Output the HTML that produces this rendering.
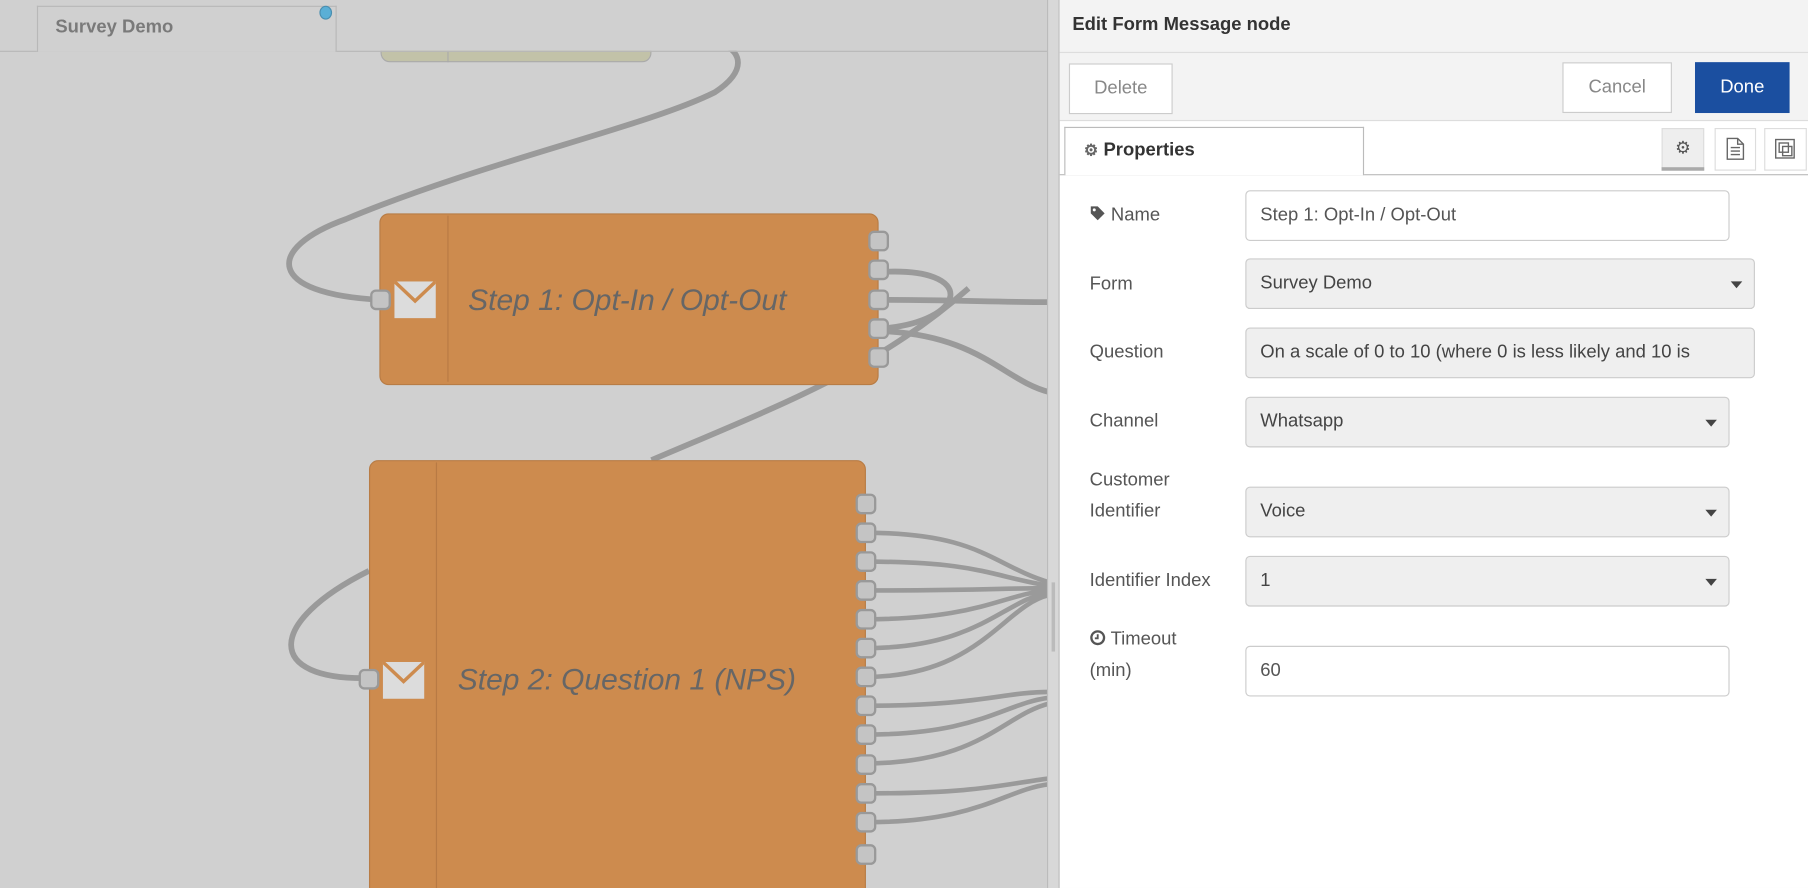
<!DOCTYPE html>
<html><head><meta charset="utf-8"><style>
html,body{margin:0;padding:0;width:1808px;height:888px;overflow:hidden;background:#d0d0d0}
#o{position:absolute;left:0;top:0;width:1808px;height:888px;overflow:hidden}
#w{position:absolute;left:0;top:0;width:1568px;height:770px;overflow:hidden;transform:scale(1.15306,1.1532);transform-origin:0 0;font-family:"Liberation Sans",sans-serif}
.a{position:absolute}
.lbl{position:absolute;left:945px;color:#555;font-size:16px;line-height:27px}
.in{position:absolute;left:1080px;box-sizing:border-box;border:1px solid #ccc;border-radius:4px;height:44px;font-size:16px;color:#555;line-height:42px;padding-left:12px;background:#fff;white-space:nowrap;overflow:hidden}
.sel{background:#efefef;color:#444}
.car{position:absolute;right:10px;top:19px;width:0;height:0;border-left:5px solid transparent;border-right:5px solid transparent;border-top:6px solid #444}
.btn{position:absolute;box-sizing:border-box;border:1px solid #ccc;background:#fff;color:#888;font-size:16px;text-align:center;height:44px;line-height:42px}
.port{position:absolute;width:18px;height:18px;box-sizing:border-box;background:#c4c4c4;border:2px solid #999;border-radius:5px}
</style></head><body><div id="o"><div id="w">
<svg class="a" style="left:0;top:0" width="920" height="770">
<g fill="none" stroke="#9a9a9a" stroke-width="5">
<path d="M330 260 C230 255 230 215 300 190 C420 140 560 110 620 80 C650 60 640 45 630 40"/>
<path d="M762 236 C850 230 840 280 762 285"/>
<path d="M762 260 C830 260 860 262 910 262"/>
<path d="M762 287 C850 290 870 330 910 340"/>
<path d="M565 399 C680 350 760 320 840 250"/>
<path d="M320 588 C230 590 230 540 320 495"/>
<g stroke-width="4">
<path d="M750 462 C850 462 860 490 910 505"/>
<path d="M750 487 C850 487 860 500 910 508"/>
<path d="M750 512 C850 512 870 510 910 510"/>
<path d="M750 537 C850 537 870 515 910 512"/>
<path d="M750 562 C850 562 870 520 910 514"/>
<path d="M750 587 C850 587 870 525 910 516"/>
<path d="M750 612 C850 612 870 600 910 600"/>
<path d="M750 637 C850 637 870 610 910 605"/>
<path d="M750 662 C850 662 870 620 910 610"/>
<path d="M750 688 C850 688 870 680 910 675"/>
<path d="M750 713 C850 713 870 685 910 680"/>
</g></g>
</svg>
<div class="a" style="left:330px;top:20px;width:235px;height:34px;background:#c2c2a8;border:1px solid #aaa;border-radius:0 0 8px 8px;box-sizing:border-box"></div>
<div class="a" style="left:388px;top:44px;width:1px;height:10px;background:#aaa"></div>
<div class="a" style="left:0;top:0;width:918px;height:44px;background:#d0d0d0"></div>
<div class="a" style="left:0;top:44px;width:918px;height:1px;background:#b8b8b8"></div>
<div class="a" style="left:32px;top:5px;width:260px;height:40px;background:#d0d0d0;border:1px solid #b8b8b8;border-bottom:none;box-sizing:border-box"></div>
<div class="a" style="left:48px;top:12px;font-size:16px;font-weight:bold;color:#7a7a7a;line-height:24px">Survey Demo</div>
<div class="a" style="left:277px;top:5px;width:11px;height:12px;border-radius:50%;background:#5aafd6;border:1px solid #4a8fb0;box-sizing:border-box"></div>
<div class="a" style="left:329px;top:185px;width:433px;height:149px;background:#cd8b4e;border:1px solid #b87c45;border-radius:8px;box-sizing:border-box"></div>
<div class="a" style="left:388px;top:187px;width:1px;height:144px;background:#b87a44"></div>
<svg class="a" style="left:342px;top:244px" width="36" height="32"><rect width="36" height="32" fill="#dcdcdc"/><path d="M0 0 L18 17 L36 0" fill="none" stroke="#cd8b4e" stroke-width="3"/></svg>
<div class="a" style="left:406px;top:244px;font-size:26px;font-style:italic;color:#666;line-height:32px">Step 1: Opt-In / Opt-Out</div>
<div class="port" style="left:321px;top:251px"></div>
<div class="port" style="left:753px;top:200px"></div><div class="port" style="left:753px;top:225px"></div><div class="port" style="left:753px;top:251px"></div><div class="port" style="left:753px;top:276px"></div><div class="port" style="left:753px;top:301px"></div>
<div class="a" style="left:320px;top:399px;width:431px;height:400px;background:#cd8b4e;border:1px solid #b87c45;border-radius:8px;box-sizing:border-box"></div>
<div class="a" style="left:378px;top:401px;width:1px;height:390px;background:#b87a44"></div>
<svg class="a" style="left:332px;top:574px" width="36" height="32"><rect width="36" height="32" fill="#dcdcdc"/><path d="M0 0 L18 17 L36 0" fill="none" stroke="#cd8b4e" stroke-width="3"/></svg>
<div class="a" style="left:397px;top:573px;font-size:26px;font-style:italic;color:#666;line-height:32px">Step 2: Question 1 (NPS)</div>
<div class="port" style="left:311px;top:580px"></div>
<div class="port" style="left:742px;top:428px"></div><div class="port" style="left:742px;top:453px"></div><div class="port" style="left:742px;top:478px"></div><div class="port" style="left:742px;top:503px"></div><div class="port" style="left:742px;top:528px"></div><div class="port" style="left:742px;top:553px"></div><div class="port" style="left:742px;top:578px"></div><div class="port" style="left:742px;top:603px"></div><div class="port" style="left:742px;top:628px"></div><div class="port" style="left:742px;top:654px"></div><div class="port" style="left:742px;top:679px"></div><div class="port" style="left:742px;top:704px"></div><div class="port" style="left:742px;top:732px"></div>
<div class="a" style="left:908px;top:0;width:10px;height:770px;background:#d8d8d8;border-left:1px solid #bbb"></div>
<div class="a" style="left:912px;top:505px;width:3px;height:60px;background:#bbb"></div>
<div class="a" style="left:918px;top:0;width:650px;height:770px;background:#fff;border-left:1px solid #bbb"></div>
<div class="a" style="left:919px;top:0;width:649px;height:105px;background:#f3f3f3"></div>
<div class="a" style="left:919px;top:45px;width:649px;height:1px;background:#ddd"></div>
<div class="a" style="left:919px;top:104px;width:649px;height:1px;background:#ddd"></div>
<div class="a" style="left:930px;top:11px;font-size:16px;font-weight:bold;color:#333;line-height:22px">Edit Form Message node</div>
<div class="btn" style="left:927px;top:55px;width:90px">Delete</div>
<div class="btn" style="left:1355px;top:54px;width:95px">Cancel</div>
<div class="btn" style="left:1470px;top:54px;width:82px;background:#1b4fa0;border-color:#1b4fa0;color:#fff">Done</div>
<div class="a" style="left:919px;top:151px;width:649px;height:1px;background:#bbb"></div>
<div class="a" style="left:923px;top:110px;width:260px;height:42px;background:#fff;border:1px solid #bbb;border-bottom:none;box-sizing:border-box"></div>
<div class="a" style="left:940px;top:118px;font-size:16px;font-weight:bold;color:#333;line-height:24px"><span style="color:#666;font-size:14px">⚙</span> Properties</div>
<div class="a" style="left:1441px;top:111px;width:37px;height:37px;background:#eee;border:1px solid #ddd;box-sizing:border-box;text-align:center;line-height:34px;color:#555;font-size:15px">⚙</div>
<div class="a" style="left:1441px;top:145px;width:37px;height:3px;background:#aaa"></div>
<div class="a" style="left:1487px;top:111px;width:36px;height:37px;background:#fff;border:1px solid #ddd;box-sizing:border-box"></div>
<svg class="a" style="left:1497px;top:119px" width="16" height="20"><path d="M1 1 H10 L15 6 V19 H1 Z M10 1 V6 H15 M4 9 H12 M4 12 H12 M4 15 H12" fill="none" stroke="#666" stroke-width="1.2"/></svg>
<div class="a" style="left:1530px;top:111px;width:37px;height:37px;background:#fff;border:1px solid #ddd;box-sizing:border-box"></div>
<svg class="a" style="left:1538px;top:119px" width="20" height="20"><rect x="2" y="2" width="16" height="16" fill="none" stroke="#666" stroke-width="1.2"/><rect x="5" y="5" width="8" height="8" fill="none" stroke="#666" stroke-width="1.2"/><rect x="8" y="8" width="8" height="8" fill="none" stroke="#666" stroke-width="1.2"/></svg>
<div class="lbl" style="top:173px"><svg width="14" height="14" style="vertical-align:-1px"><path d="M1 1 H7 L13 7 L7 13 L1 7 Z" fill="#555"/><circle cx="4" cy="4" r="1.3" fill="#fff"/></svg> Name</div>
<div class="in" style="top:165px;width:420px">Step 1: Opt-In / Opt-Out</div>
<div class="lbl" style="top:233px">Form</div>
<div class="in sel" style="top:224px;width:442px">Survey Demo<div class="car"></div></div>
<div class="lbl" style="top:292px">Question</div>
<div class="in sel" style="top:284px;width:442px">On a scale of 0 to 10 (where 0 is less likely and 10 is</div>
<div class="lbl" style="top:352px">Channel</div>
<div class="in sel" style="top:344px;width:420px">Whatsapp<div class="car"></div></div>
<div class="lbl" style="top:403px">Customer<br>Identifier</div>
<div class="in sel" style="top:422px;width:420px">Voice<div class="car"></div></div>
<div class="lbl" style="top:490px">Identifier Index</div>
<div class="in sel" style="top:482px;width:420px">1<div class="car"></div></div>
<div class="lbl" style="top:541px"><svg width="14" height="14" style="vertical-align:-1px"><circle cx="7" cy="7" r="5.5" fill="none" stroke="#555" stroke-width="2"/><path d="M7 4 V7.5 H4.5" fill="none" stroke="#555" stroke-width="1.6"/></svg> Timeout<br>(min)</div>
<div class="in" style="top:560px;width:420px">60</div>
</div></div></body></html>
